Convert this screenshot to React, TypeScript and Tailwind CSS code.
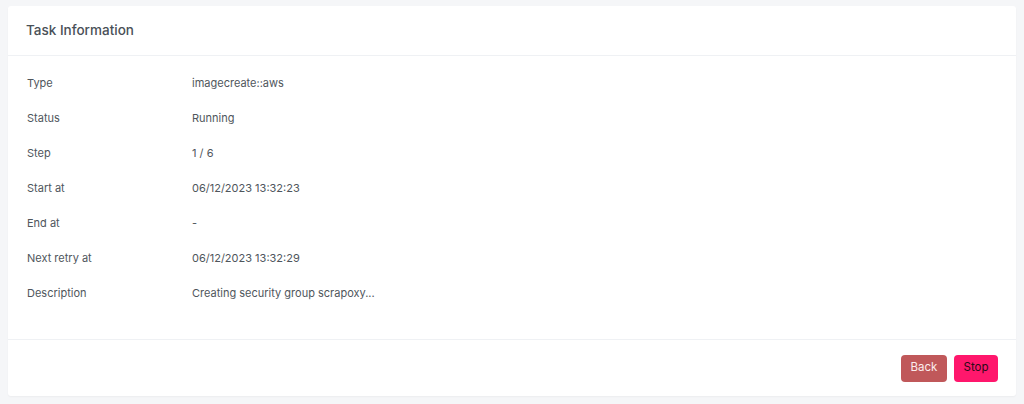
const rows: [string, string][] = [
  ["Type", "imagecreate::aws"],
  ["Status", "Running"],
  ["Step", "1 / 6"],
  ["Start at", "06/12/2023 13:32:23"],
  ["End at", "-"],
  ["Next retry at", "06/12/2023 13:32:29"],
  ["Description", "Creating security group scrapoxy..."],
]

export default function App() {
  return (
    <div
      className="min-h-[404px] bg-[#f5f6f8] px-2 pt-[6px] pb-2"
      style={{ fontFamily: "Inter, 'Noto Sans', sans-serif" }}
    >
      <div className="bg-white rounded-[3px] shadow-[0_1px_2px_rgba(0,0,0,0.04)] w-[1008px]">
        {/* Header */}
        <div className="h-[50px] flex items-center px-[18px] border-b border-[#eff1f4]">
          <h2 className="text-[13.5px] font-medium text-[#495057]">Task Information</h2>
        </div>

        {/* Body */}
        <div className="px-[19px] pt-[10px] pb-[28px]">
          {rows.map(([label, value]) => (
            <div key={label} className="h-[35px] flex items-center text-[11px] text-[#4f565c]">
              <div className="w-[165px] shrink-0">{label}</div>
              <div>{value}</div>
            </div>
          ))}
        </div>

        {/* Footer */}
        <div className="h-[57px] flex items-center justify-end gap-[7px] px-[18px] border-t border-[#eff1f4]">
          <button className="h-[27px] w-[46px] rounded-[4px] bg-[#c0585a] text-[11.5px] text-[#fbecec]">
            Back
          </button>
          <button className="h-[27px] w-[44px] rounded-[4px] bg-[#ff176c] text-[11.5px] text-[#2b0a18]">
            Stop
          </button>
        </div>
      </div>
    </div>
  )
}
